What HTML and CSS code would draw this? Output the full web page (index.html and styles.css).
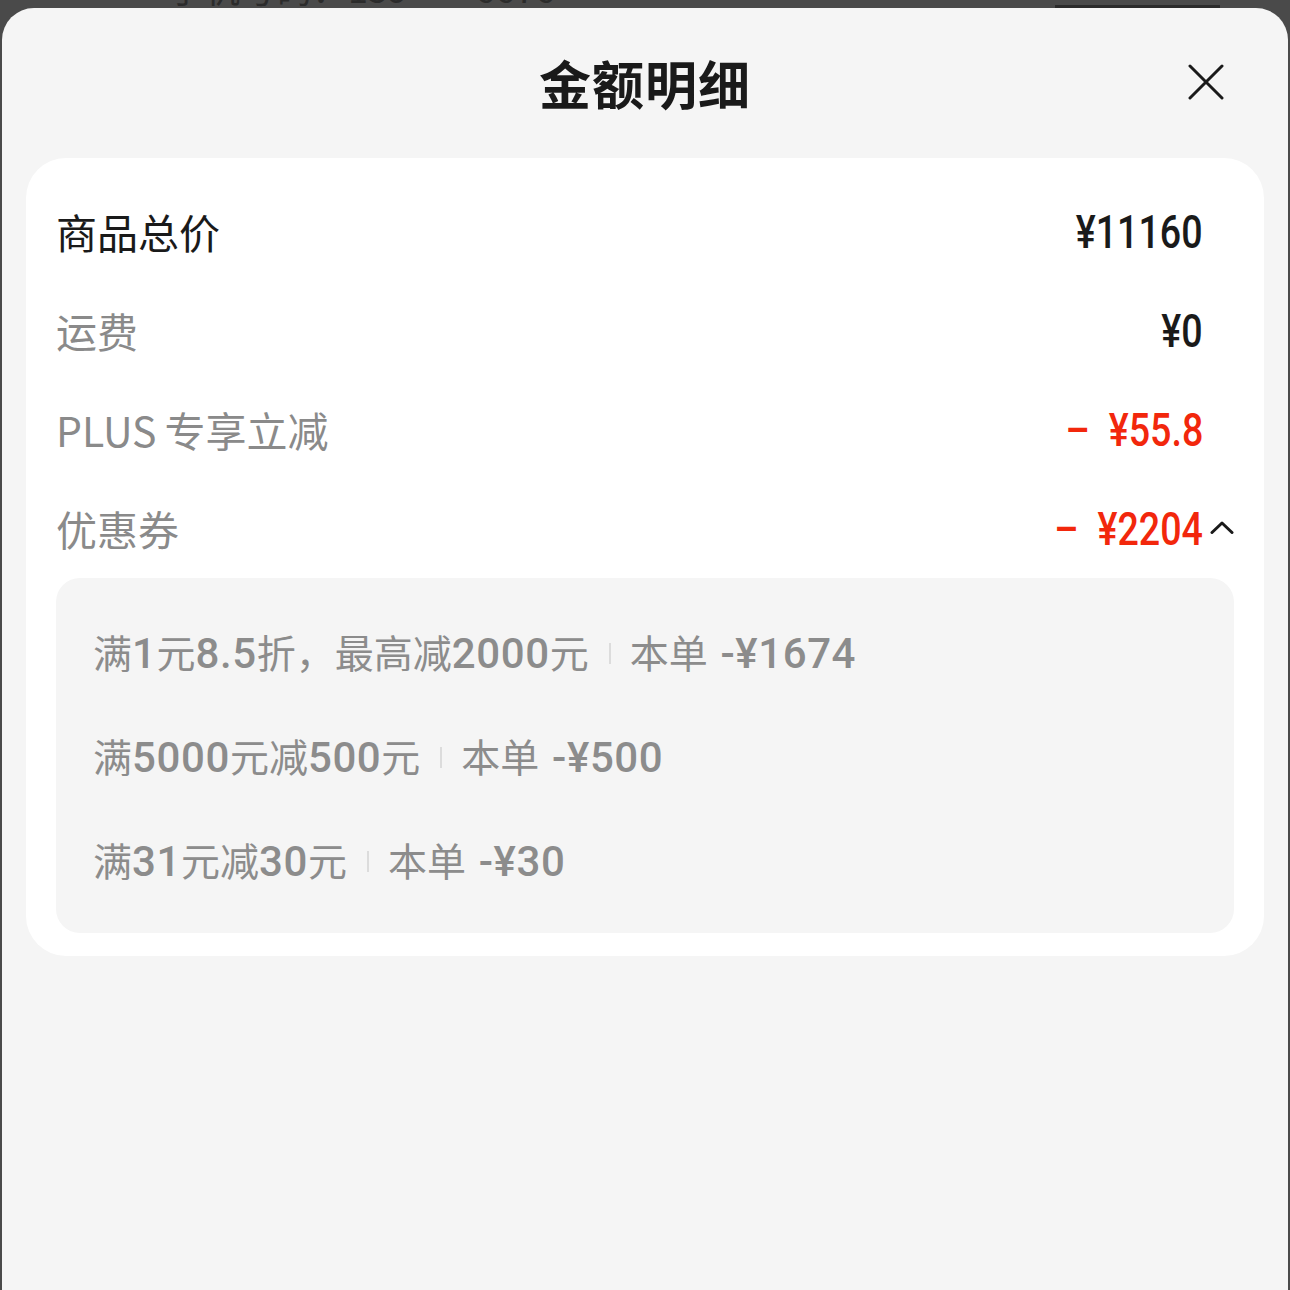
FILE: index.html
```html
<!DOCTYPE html>
<html lang="zh-CN">
<head>
<meta charset="utf-8">
<title>金额明细</title>
<link rel="stylesheet" href="styles.css">
</head>
<body>
<div class="backdrop">
  <div class="backdrop-row">
    <span class="backdrop-text">手机号码：159****6676</span>
    <span class="backdrop-btn"></span>
  </div>
</div>
<div class="sheet">
  <header class="sheet-header">
    <span></span>
    <h1 class="sheet-title">金额明细</h1>
    <button class="close" aria-label="关闭">
      <svg width="36" height="36" viewBox="0 0 36 36"><path d="M2 2 L34 34 M34 2 L2 34" stroke="#1a1a1a" stroke-width="3" stroke-linecap="round" fill="none"/></svg>
    </button>
  </header>
  <section class="card">
    <div class="row">
      <span class="label label-strong">商品总价</span>
      <span class="value-wrap"><span class="value">¥11160</span><span class="slot"></span></span>
    </div>
    <div class="row">
      <span class="label">运费</span>
      <span class="value-wrap"><span class="value">¥0</span><span class="slot"></span></span>
    </div>
    <div class="row">
      <span class="label"><span class="latin">PLUS</span>专享立减</span>
      <span class="value-wrap"><span class="value red">–&ensp;¥55.8</span><span class="slot"></span></span>
    </div>
    <div class="row">
      <span class="label">优惠券</span>
      <span class="value-wrap"><span class="value red">–&ensp;¥2204</span><span class="slot"><svg class="chev" width="24" height="13" viewBox="0 0 24 13"><path d="M2 11.5 L12 2 L22 11.5" stroke="#1a1a1a" stroke-width="3" fill="none" stroke-linecap="round" stroke-linejoin="round"/></svg></span></span>
    </div>
    <div class="coupons">
      <div class="coupon">
        <span class="c-desc">满<b>1</b>元<b>8.5</b>折，最高减<b>2000</b>元</span>
        <span class="sep"></span>
        <span class="c-amt">本单 <b>-¥1674</b></span>
      </div>
      <div class="coupon">
        <span class="c-desc">满<b>5000</b>元减<b>500</b>元</span>
        <span class="sep"></span>
        <span class="c-amt">本单 <b>-¥500</b></span>
      </div>
      <div class="coupon">
        <span class="c-desc">满<b>31</b>元减<b>30</b>元</span>
        <span class="sep"></span>
        <span class="c-amt">本单 <b>-¥30</b></span>
      </div>
    </div>
  </section>
</div>
</body>
</html>
```

FILE: styles.css
```css
* { box-sizing: border-box; }
html, body { margin: 0; padding: 0; }
body {
  background: #4a4a4a;
  font-family: "Noto Sans CJK SC", "Noto Sans", sans-serif;
  width: 1290px;
  height: 1290px;
  overflow: hidden;
}
.backdrop {
  height: 8px;
  overflow: hidden;
}
.backdrop-row {
  display: flex;
  justify-content: space-between;
  align-items: flex-end;
  margin-top: -34px;
  height: 42px;
  padding: 0 70px 0 168px;
}
.backdrop-text {
  font-size: 36px;
  line-height: 42px;
  color: #2b2b2b;
}
.backdrop-btn {
  width: 165px;
  height: 40px;
  border-bottom: 3px solid #2b2b2b;
}
.sheet {
  margin: 0 2px;
  height: 1282px;
  background: #f5f5f5;
  border-radius: 32px 32px 0 0;
}
.sheet-header {
  height: 150px;
  display: grid;
  grid-template-columns: 1fr auto 1fr;
  align-items: center;
}
.sheet-title {
  margin: 0;
  font-size: 52px;
  font-weight: 700;
  color: #1a1a1a;
  line-height: 1;
  letter-spacing: 1px;
}
.close {
  justify-self: end;
  margin-right: 64px;
  margin-top: -2px;
  background: none;
  border: 0;
  padding: 0;
  width: 36px;
  height: 36px;
  display: flex;
}
.card {
  margin: 0 24px;
  background: #ffffff;
  border-radius: 40px;
  padding: 24px 30px 23px 30px;
}
.row {
  height: 99px;
  display: flex;
  align-items: center;
  justify-content: space-between;
}
.label {
  font-size: 41px;
  color: #8a8a8a;
  line-height: 1;
}
.label .latin { margin-right: 8px; }
.label-strong { color: #1a1a1a; }
.value-wrap {
  display: flex;
  align-items: center;
}
.value {
  display: inline-block;
  font-family: Roboto, "Liberation Sans", sans-serif;
  font-weight: 500;
  font-size: 47px;
  color: #1a1a1a;
  line-height: 1;
  transform: scaleX(0.8);
  transform-origin: right center;
  white-space: nowrap;
}
.value.red { color: #f2270c; }
.slot {
  width: 31px;
  display: flex;
  justify-content: flex-end;
  align-items: center;
}
.chev { margin-top: -3px; }
.coupons {
  background: #f5f5f5;
  border-radius: 24px;
  padding: 23px 30px 20px 37px;
}
.coupon {
  height: 104px;
  display: flex;
  align-items: center;
  color: #8c8c8c;
  font-size: 39px;
  line-height: 1;
  white-space: nowrap;
}
.coupon b {
  font-family: Roboto, "Liberation Sans", sans-serif;
  font-weight: 500;
  font-size: 42px;
  letter-spacing: 0.6px;
}
.c-amt b { margin-left: 4px; }
.sep {
  width: 2px;
  height: 21px;
  background: #dcdcdc;
  margin: 0 19px 0 20px;
}
```
